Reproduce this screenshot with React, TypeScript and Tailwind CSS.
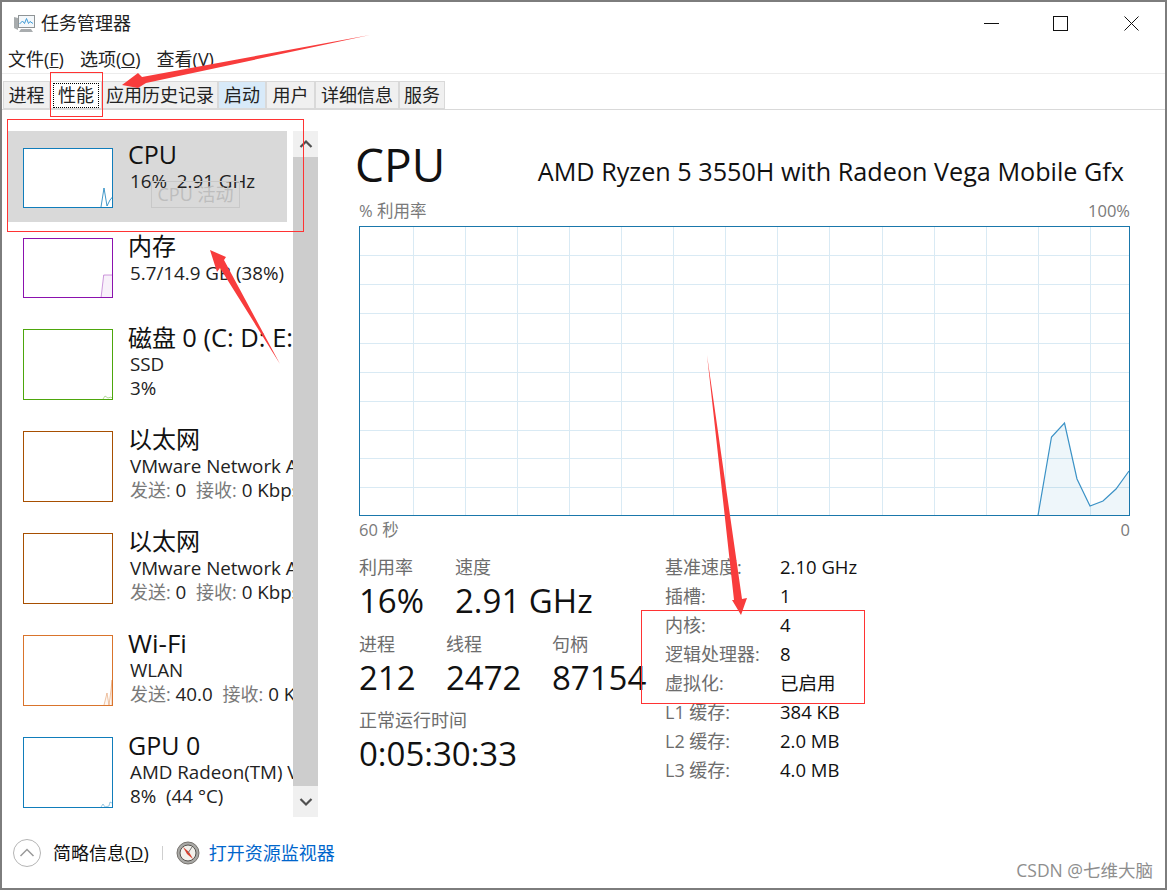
import type { ReactNode } from 'react';

const FONT = "font-['Open_Sans','Noto_Sans_CJK_SC',sans-serif]";

const TABS = [
  { label: '进程', w: 'w-[47px]', cls: 'bg-[#f0f0f0]' },
  { label: '性能', w: 'w-[52px]', cls: 'bg-white' },
  { label: '应用历史记录', w: 'w-[116px]', cls: 'bg-[#f0f0f0]' },
  { label: '启动', w: 'w-[48px]', cls: 'bg-[#d8eaf9]' },
  { label: '用户', w: 'w-[49px]', cls: 'bg-[#f0f0f0]' },
  { label: '详细信息', w: 'w-[84px]', cls: 'bg-[#f0f0f0]' },
  { label: '服务', w: 'w-[46px]', cls: 'bg-[#f0f0f0]' },
];

const Thumb = ({ color, h, line, fill }: { color: string; h: number; line?: string; fill?: string }) => (
  <svg width="90" height={h} viewBox={`0 0 90 ${h}`} className="block shrink-0">
    {fill && <path d={fill} fill={color} fillOpacity="0.06" />}
    {line && <path d={line} fill="none" stroke={color} strokeWidth="0.7" strokeOpacity="0.6" />}
    <rect x="0.5" y="0.5" width="89" height={h - 1} fill="none" stroke={color} />
  </svg>
);

const Item = ({
  title,
  thumb,
  children,
  className,
}: {
  title: ReactNode;
  thumb: ReactNode;
  children: ReactNode;
  className: string;
}) => (
  <div className={`flex pl-[21px] ${className}`}>
    <div className="pt-[6px]">{thumb}</div>
    <div className="ml-[15px] -mt-[1px] min-w-0 flex-1 overflow-hidden whitespace-nowrap">
      <div className="h-[30px] text-[24px] leading-[30px] text-[#111]">{title}</div>
      <div className="pl-[2px] text-[18.8px] leading-[24px] text-[#222]">{children}</div>
    </div>
  </div>
);

const Gray = ({ children }: { children: ReactNode }) => <span className="text-[18px] text-[#7a7a7a]">{children}</span>;

const SPECS = [
  ['基准速度:', '2.10 GHz'],
  ['插槽:', '1'],
  ['内核:', '4'],
  ['逻辑处理器:', '8'],
  ['虚拟化:', '已启用'],
  ['L1 缓存:', '384 KB'],
  ['L2 缓存:', '2.0 MB'],
  ['L3 缓存:', '4.0 MB'],
];

const Stat = ({ label, value, w }: { label: string; value: string; w: string }) => (
  <div className={`${w} shrink-0 whitespace-nowrap`}>
    <div className="h-[28px] text-[18px] leading-[28px] text-[#6d6d6d]">{label}</div>
    <div className="h-[40px] text-[33px] leading-[40px] text-[#111]">{value}</div>
  </div>
);

const Graph = () => {
  const vertical = [413, 465, 517, 569, 621, 673, 725, 777, 829, 882, 934, 986, 1038, 1090];
  const horizontal = [255, 284, 313, 343, 372, 401, 430, 458, 487];
  return (
    <svg width="771" height="291" viewBox="359 226 771 291" className="block">
      {vertical.map((x) => (
        <line key={x} x1={x + 0.5} y1="226" x2={x + 0.5} y2="516" stroke="#d9eaf4" />
      ))}
      {horizontal.map((y) => (
        <line key={y} x1="359" y1={y + 0.5} x2="1130" y2={y + 0.5} stroke="#d9eaf4" />
      ))}
      <path
        d="M1038 515.5L1051.5 437L1064.5 423L1077 479L1090 506L1103 501L1116 489L1129 471V515.5Z"
        fill="#117dbb"
        fillOpacity="0.07"
      />
      <path
        d="M1038 515.5L1051.5 437L1064.5 423L1077 479L1090 506L1103 501L1116 489L1129 471"
        fill="none"
        stroke="#3b92c6"
        strokeWidth="1.2"
      />
      <rect x="359.5" y="226.5" width="770" height="289" fill="none" stroke="#1a77ab" />
    </svg>
  );
};

const AppIcon = () => (
  <svg width="22" height="20" viewBox="0 0 22 20" className="shrink-0">
    <path d="M0 3l4 1v12l-4-2z" fill="#a7abad" />
    <rect x="4" y="1" width="17" height="13" fill="#8f9496" />
    <rect x="5" y="2" width="15" height="11" fill="#f4f8fb" />
    <path d="M5.5 10l3-3 2 2.5 2-5 2 5 1.5-2 3 2" fill="none" stroke="#3f9bd6" strokeWidth="1" />
    <path d="M7 15h10l2 3H5z" fill="#a9adaf" />
  </svg>
);

const MonitorIcon = () => (
  <svg width="24" height="24" viewBox="0 0 24 24" className="shrink-0">
    <circle cx="12" cy="12" r="11" fill="#a9a9a6" stroke="#77736e" />
    <circle cx="12" cy="12" r="8" fill="#f3f1ec" stroke="#55524e" />
    <path d="M7 6l6 5 4 7-6-5z" fill="#d6402f" />
    <path d="M12 12l4-6" stroke="#777" strokeWidth="1" />
  </svg>
);

export default function App() {
  return (
    <div className={`relative flex h-[890px] w-[1167px] flex-col overflow-hidden border-2 border-[#7d7d7d] bg-white ${FONT}`}>
      {/* 标题栏 */}
      <div className="flex h-[43px] shrink-0 items-center pl-[12px]">
        <AppIcon />
        <span className="ml-[5px] text-[18px] text-[#222]">任务管理器</span>
        <div className="ml-auto flex items-center pr-[26px]">
          <svg width="15" height="15" viewBox="0 0 15 15" className="mr-[54px]">
            <line x1="0" y1="7.5" x2="15" y2="7.5" stroke="#111" />
          </svg>
          <svg width="15" height="15" viewBox="0 0 15 15" className="mr-[56px]">
            <rect x="0.5" y="0.5" width="14" height="14" fill="none" stroke="#111" />
          </svg>
          <svg width="15" height="15" viewBox="0 0 15 15">
            <path d="M0.5 0.5L14.5 14.5M14.5 0.5L0.5 14.5" stroke="#111" />
          </svg>
        </div>
      </div>

      {/* 菜单 */}
      <div className="flex h-[28px] shrink-0 items-center gap-[16px] pl-[6px] text-[18px] text-[#222]">
        <span>文件(<u>F</u>)</span>
        <span>选项(<u>O</u>)</span>
        <span>查看(<u>V</u>)</span>
      </div>
      <div className="h-[8px] shrink-0 border-t border-[#ececec]" />

      {/* 选项卡 */}
      <div className="flex h-[29px] shrink-0 border-b border-[#d9d9d9] pl-[1px]">
        {TABS.map((t) => (
          <div
            key={t.label}
            className={`${t.w} ${t.cls} flex h-[28px] shrink-0 items-center justify-center border border-[#d9d9d9] text-[18px] text-[#222] whitespace-nowrap`}
          >
            {t.label === '性能' ? (
              <span className="border border-dotted border-black px-[4px] leading-[23px]">性能</span>
            ) : (
              t.label
            )}
          </div>
        ))}
      </div>

      {/* 主体 */}
      <div className="flex h-[708px] shrink-0">
        <div className="flex w-[316px] shrink-0 flex-col pt-[21px]">
          <div className="flex min-h-0 flex-1">
            <div className="w-[291px] shrink-0 overflow-hidden">
              <div className="relative ml-[6px] h-[91px] w-[279px] bg-[#d9d9d9]">
                <div className="flex pl-[15px] pt-[11px]">
                  <div className="pt-[6px]">
                    <svg width="90" height="60" viewBox="0 0 90 60" className="block bg-white">
                      <path d="M78 59L81 40L84 58L87 52L89.5 49" fill="none" stroke="#117dbb" strokeWidth="0.8" />
                      <rect x="0.5" y="0.5" width="89" height="59" fill="none" stroke="#117dbb" />
                    </svg>
                  </div>
                  <div className="ml-[15px] whitespace-nowrap">
                    <div className="-mt-[3px] h-[30px] text-[25px] leading-[30px] text-[#111]">CPU</div>
                    <div className="pl-[2px] text-[18.8px] leading-[24px] text-[#222]">16%&nbsp; 2.91 GHz</div>
                  </div>
                </div>
                <div className="absolute left-[143px] top-[50px] flex h-[27px] w-[89px] items-center justify-center border border-[#c8c8c8] text-[18px] text-[#bdbdbd]">
                  CPU 活动
                </div>
              </div>
              <Item className="h-[91px] pt-[10px]" title="内存" thumb={<Thumb color="#8b12ae" h={60} line="M78 60L80.7 37H90" fill="M78 60L80.7 37H90V60Z" />}>
                5.7/14.9 GB (38%)
              </Item>
              <Item className="h-[102px] pt-[10px]" title={<>磁盘 <span className="text-[25.5px]">0 (C: D: E:)</span></>} thumb={<Thumb color="#4da60c" h={71} line="M80 70L82 67L85 69L88 68L90 70" />}>
                <div>SSD</div>
                <div>3%</div>
              </Item>
              <Item className="h-[102px] pt-[10px]" title="以太网" thumb={<Thumb color="#a74f01" h={71} />}>
                <div>VMware Network Adapter VMnet1</div>
                <div><Gray>发送:</Gray> 0&nbsp; <Gray>接收:</Gray> 0 Kbps</div>
              </Item>
              <Item className="h-[102px] pt-[10px]" title="以太网" thumb={<Thumb color="#a74f01" h={71} />}>
                <div>VMware Network Adapter VMnet2</div>
                <div><Gray>发送:</Gray> 0&nbsp; <Gray>接收:</Gray> 0 Kbps</div>
              </Item>
              <Item className="h-[102px] pt-[10px]" title={<span className="text-[26px]">Wi-Fi</span>} thumb={<Thumb color="#d9742c" h={71} line="M81 70L84 58L86 70L88 55L89 45V70" fill="M81 70L84 58L86 70L88 55L89 45V70Z" />}>
                <div>WLAN</div>
                <div><Gray>发送:</Gray> 40.0&nbsp; <Gray>接收:</Gray> 0 Kbps</div>
              </Item>
              <Item className="h-[96px] pt-[10px]" title={<span className="text-[25px]">GPU 0</span>} thumb={<Thumb color="#117dbb" h={71} line="M78 70L80 67L82 70L86 69L87 65L89 66" />}>
                <div>AMD Radeon(TM) Vega 8</div>
                <div>8%&nbsp; (44 °C)</div>
              </Item>
            </div>

            {/* 滚动条 */}
            <div className="flex h-[686px] w-[25px] shrink-0 flex-col bg-[#f0f0f0]">
              <div className="flex h-[26px] shrink-0 items-center justify-center">
                <svg width="14" height="10" viewBox="0 0 14 10">
                  <path d="M1.5 8L7 2.5L12.5 8" fill="none" stroke="#505050" strokeWidth="2.2" />
                </svg>
              </div>
              <div className="flex-1 bg-[#cdcdcd]" />
              <div className="flex h-[31px] shrink-0 items-center justify-center">
                <svg width="14" height="10" viewBox="0 0 14 10">
                  <path d="M1.5 2L7 7.5L12.5 2" fill="none" stroke="#505050" strokeWidth="2.2" />
                </svg>
              </div>
            </div>
          </div>
        </div>

        {/* 右侧详情 */}
        <div className="min-w-0 flex-1 pl-[41px] pr-[35px] pt-[24px]">
          <div className="flex h-[60px] items-center justify-between pr-[6px]">
            <span className="-ml-[4px] text-[46px] leading-[60px] text-[#111]">CPU</span>
            <span className="mt-[16px] text-[25.2px] text-[#111] whitespace-nowrap">AMD Ryzen 5 3550H with Radeon Vega Mobile Gfx</span>
          </div>
          <div className="mt-[6px] flex h-[23px] items-center justify-between text-[16.5px] text-[#7a7a7a]">
            <span>% 利用率</span>
            <span>100%</span>
          </div>
          <div className="mt-[3px]">
            <Graph />
          </div>
          <div className="flex h-[26px] items-center justify-between text-[16.5px] text-[#7a7a7a]">
            <span>60 秒</span>
            <span>0</span>
          </div>

          <div className="mt-[10px] flex">
            <div className="w-[306px] shrink-0">
              <div className="flex">
                <Stat label="利用率" value="16%" w="w-[96px]" />
                <Stat label="速度" value="2.91 GHz" w="w-[200px]" />
              </div>
              <div className="mt-[9px] flex">
                <Stat label="进程" value="212" w="w-[87px]" />
                <Stat label="线程" value="2472" w="w-[106px]" />
                <Stat label="句柄" value="87154" w="w-[100px]" />
              </div>
              <div className="mt-[8px]">
                <Stat label="正常运行时间" value="0:05:30:33" w="w-[200px]" />
              </div>
            </div>
            <div className="grid auto-rows-[29px] grid-cols-[115px_1fr] items-center text-[18.5px]">
              {SPECS.map(([k, v]) => (
                <div key={k} className="contents">
                  <span className="text-[18px] text-[#6d6d6d]">{k}</span>
                  <span className="-mt-[1px] text-[#111]">{v}</span>
                </div>
              ))}
            </div>
          </div>
        </div>
      </div>

      {/* 底部 */}
      <div className="flex flex-1 items-center pl-[10px]">
        <svg width="30" height="30" viewBox="0 0 30 30" className="shrink-0">
          <circle cx="15" cy="15" r="13.5" fill="none" stroke="#b5b5b5" />
          <path d="M8.5 18L15 11.5L21.5 18" fill="none" stroke="#9a9a9a" strokeWidth="1.5" />
        </svg>
        <span className="ml-[11px] text-[18px] text-[#111]">简略信息(<u>D</u>)</span>
        <span className="ml-[13px] h-[14px] w-px bg-[#cfcfcf]" />
        <span className="ml-[13px]"><MonitorIcon /></span>
        <span className="ml-[9px] text-[18px] text-[#0066cc]">打开资源监视器</span>
      </div>

      {/* 标注 */}
      <div className="absolute left-[48px] top-[70px] h-[45px] w-[53px] border border-[#ff3333]" />
      <div className="absolute left-[5px] top-[117px] h-[113px] w-[297px] border border-[#ff3333]" />
      <div className="absolute left-[639px] top-[608px] h-[94px] w-[224px] border border-[#ff3333]" />
      <svg width="1167" height="890" viewBox="0 0 1167 890" className="pointer-events-none absolute -left-[2px] -top-[2px]">
        <path d="M370 35L142 77L138 73L122 85L138 88L146 83Z" fill="#f83c3c" />
        <path d="M280 364L224 260L226 257L210 250L217 272L220 268Z" fill="#f83c3c" />
        <path d="M707 355L742 599L747 598L741 615L732 600L734 600Z" fill="#f83c3c" />
      </svg>

      <span className="absolute bottom-[5px] right-[12px] text-[17.5px] text-[#8e8e8e]">CSDN @七维大脑</span>
    </div>
  );
}
